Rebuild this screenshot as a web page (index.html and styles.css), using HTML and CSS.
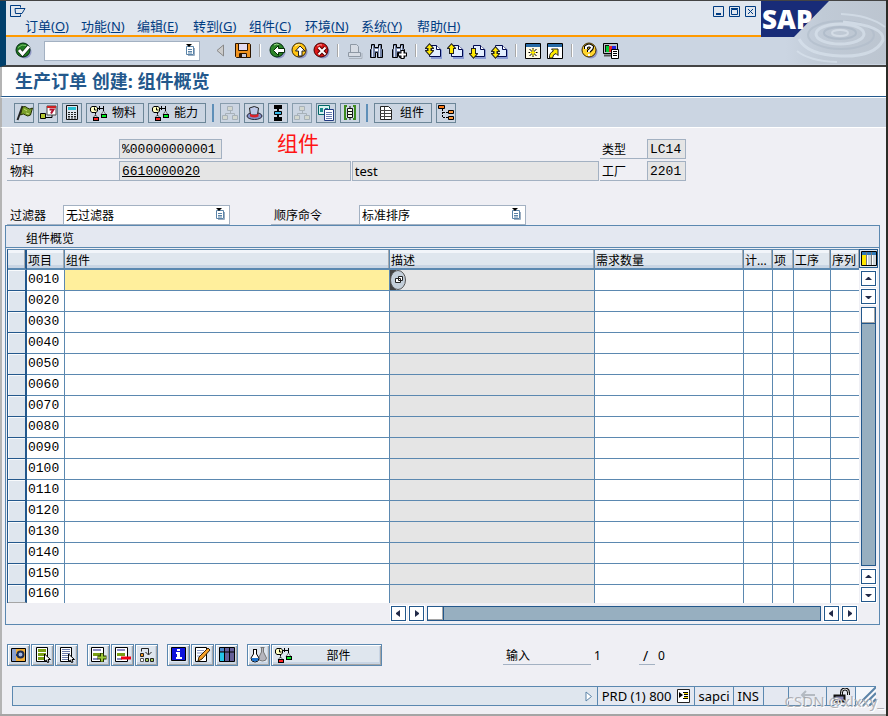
FILE: index.html
```
<!DOCTYPE html>
<html lang="zh">
<head>
    <meta charset="UTF-8">
    <meta name="viewport" content="width=device-width, initial-scale=1.0">
    <title>生产订单 创建: 组件概览</title>
    <link rel="stylesheet" href="styles.css">
</head>
<body>
    <!-- icons shared by the toolbars -->
    <svg class="sprite" aria-hidden="true">
        <symbol id="i-balance" viewBox="0 0 17 16">
            <path d="M2 1h4l2 2v3L6 8H2L0 6V3z" fill="#000"/>
            <path d="M2 2h4l1 1v3L6 7H2L1 6V3z" fill="#ffffc0"/>
            <path d="M4.500 2.500v2.500h2" fill="none" stroke="#000"/>
            <path d="M8 3.500h6M9.500 1v4M13.500 1v5M5.500 8v3" stroke="#000" fill="none"/>
            <path d="M11 9.500L13.500 6 16 9.500M3 13l2.500-3.500L8 13" stroke="#777" fill="none"/>
            <path d="M11 9h6v4h-6zM3 12h6v4H3z" fill="#000"/>
            <path d="M12 10h4v2h-4z" fill="#0e2"/>
            <path d="M4 13h4v2H4z" fill="#f22"/>
        </symbol>
        <symbol id="i-list" viewBox="0 0 10 12">
            <path d="M1.500 2.500h7v8h-7z" fill="#fff" stroke="#5b84a8"/>
            <path d="M3 5.500h4M3 7.500h4M3 9h4" stroke="#5b84a8"/>
            <path d="M9.500 4v7.500H3" fill="none" stroke="#9aacc0"/>
            <path d="M1 0h6L4 3z" fill="#000"/>
        </symbol>
        <symbol id="i-binoc" viewBox="0 0 16 16">
            <path d="M2.500 1.500h3v3h4v-3h3v4l1 1v8h-5v-5h-2v5h-5v-8l1-1z" fill="#7484a6" stroke="#000"/>
            <path d="M3.500 3v11M10.500 3v11" stroke="#dde6f5"/>
            <path d="M6 6h3v2H6z" fill="#fff"/>
        </symbol>
        <symbol id="i-page" viewBox="0 0 17 16">
            <path d="M6 4h8l3 3v9H6z" fill="#8b9cd4"/>
            <path d="M4.500 2.500h7l4 4v7h-11z" fill="#e4efff" stroke="#000a50"/>
            <path d="M11.500 2.500v4h4" fill="#fff" stroke="#000a50"/>
        </symbol>
        <symbol id="i-tree" viewBox="0 0 16 16">
            <path d="M8.500 5v3M3.500 11V8.500h9V11" fill="none" stroke="#98a2a8"/>
            <path d="M5.500 1.500h5v4h-5zM.500 10.500h5v4h-5zM10.500 10.500h5v4h-5z" fill="#d5d8c8" stroke="#98a2a8"/>
        </symbol>
        <symbol id="i-cursor" viewBox="0 0 7 9">
            <path d="M.500 0v7.500l2-1.500 1 2.500 1.500-.500-1-2.500h2.500z" fill="#fff" stroke="#000"/>
        </symbol>
    </svg>

    <div class="window">
        <header class="head">
            <div class="head-main">
                <nav class="menubar">
                    <button class="sysmenu" aria-label="系统菜单">
                        <svg width="16" height="12" viewBox="0 0 16 12"><path d="M10.500 2.500v-2H.500v11h10v-2M5 3.500h10l-3 5H5.500z" fill="none" stroke="#003c82"/></svg>
                    </button>
                    <div class="menus">
                        <button>订单(<u>O</u>)</button>
                        <button>功能(<u>N</u>)</button>
                        <button>编辑(<u>E</u>)</button>
                        <button>转到(<u>G</u>)</button>
                        <button>组件(<u>C</u>)</button>
                        <button>环境(<u>N</u>)</button>
                        <button>系统(<u>Y</u>)</button>
                        <button>帮助(<u>H</u>)</button>
                    </div>
                    <div class="winbtns">
                        <button aria-label="最小化"><svg width="11" height="11"><path d="M.500.500h10v10H.500z" fill="none" stroke="#003c82"/><path d="M3 7h5v2H3z" fill="#003c82"/></svg></button>
                        <button aria-label="最大化"><svg width="11" height="11"><path d="M.500.500h10v10H.500zM2.500 3.500h6v5h-6zM2 2.500h7" fill="none" stroke="#003c82"/></svg></button>
                        <button aria-label="关闭"><svg width="11" height="11"><path d="M.500.500h10v10H.500zM3 3l5 5M8 3l-5 5" fill="none" stroke="#003c82"/></svg></button>
                    </div>
                </nav>
                <div class="std-toolbar">
                    <button aria-label="回车"><svg width="17" height="17" viewBox="0 0 17 17"><circle cx="10" cy="10" r="6.500" fill="#8f96c4"/><circle cx="8" cy="8" r="7" fill="#207a20" stroke="#002a10"/><path d="M3 5.500q4-4 8-2" stroke="#7dc36c" fill="none"/><path d="M4 8l3.500 4L14 4.500" fill="none" stroke="#000" stroke-width="4"/><path d="M4 8l3.500 4L14 4.500" fill="none" stroke="#fff" stroke-width="3"/></svg></button>
                    <span class="command">
                        <input type="text" aria-label="命令">
                        <svg width="10" height="12"><use href="#i-list"/></svg>
                    </span>
                    <button aria-label="收起" class="collapse"><svg width="9" height="13"><path d="M7.500 1v11L1 6.500z" fill="#ccc" stroke="#888"/></svg></button>
                    <button aria-label="保存"><svg width="16" height="16"><path d="M.500.500h14l1 1v13H1.500l-1-1z" fill="#f0931e" stroke="#2a1400"/><path d="M3.500.500h9v7h-9z" fill="#e3dbf0" stroke="#2a1400"/><path d="M4.500 10.500h7v4h-7z" fill="#c8c8d8" stroke="#2a1400"/><path d="M5 11h2v4H5z" fill="#2a1400"/></svg></button>
                    <i class="sep"></i>
                    <button aria-label="返回"><svg width="17" height="17" viewBox="0 0 17 17"><circle cx="10" cy="10" r="6.500" fill="#8f96c4"/><circle cx="8" cy="8" r="7" fill="#2c8528" stroke="#002a10"/><path d="M5 3q3-2 5 0" stroke="#a6dd90" fill="none"/><path d="M4.500 8.500l5-5V6.500h6v4h-6v3z" fill="#fff" stroke="#053005"/></svg></button>
                    <button aria-label="退出"><svg width="17" height="17" viewBox="0 0 17 17"><circle cx="10" cy="10" r="6.500" fill="#8f96c4"/><circle cx="8" cy="8" r="7" fill="#ffc412" stroke="#3d2900"/><path d="M4 4q3-2 5-1" stroke="#fff6ad" fill="none"/><path d="M9 4l5 5h-3v5H7.500V9h-3z" fill="#fff" stroke="#222"/></svg></button>
                    <button aria-label="取消"><svg width="17" height="17" viewBox="0 0 17 17"><circle cx="10" cy="10" r="6.500" fill="#8f96c4"/><circle cx="8" cy="8" r="7" fill="#dc1717" stroke="#400"/><path d="M4 4q3-2 5-1" stroke="#ffa0a0" fill="none"/><path d="M5.500 5.500l7 7M12.500 5.500l-7 7" stroke="#500" stroke-width="4"/><path d="M5.500 5.500l7 7M12.500 5.500l-7 7" stroke="#fff" stroke-width="2"/></svg></button>
                    <i class="sep"></i>
                    <button aria-label="打印"><svg width="16" height="16"><path d="M3.500 9V1.500h6l2 2V9M1.500 9.500h12v4h-12z" fill="#d7dce4" stroke="#8e98a4"/><path d="M2 15.500h13V10" fill="none" stroke="#aab2bc"/></svg></button>
                    <button aria-label="查找"><svg width="16" height="16"><use href="#i-binoc"/></svg></button>
                    <button aria-label="继续查找"><svg width="16" height="16"><use href="#i-binoc"/><path d="M11.500 7v9M7 11.500h9" stroke="#000" stroke-width="4"/><path d="M11.500 8v7M8 11.500h7" stroke="#fff" stroke-width="2"/></svg></button>
                    <i class="sep"></i>
                    <button aria-label="第一页"><svg width="17" height="16"><use href="#i-page"/><path d="M0 5l4.500-5L9 5v1H7v1h2v1l-4.500 5L0 8V7h2V6H0z" fill="#222"/><path d="M1.500 5l3-3.500 3 3.500H5.500v3h2l-3 3.500L1.500 8h2V5z" fill="#ffe800"/></svg></button>
                    <button aria-label="上一页"><svg width="17" height="16"><use href="#i-page"/><path d="M0 5l4.500-5L9 5v1H7v5H2V6H0z" fill="#222"/><path d="M1.500 5l3-3.500 3 3.500H6v5H3V5z" fill="#ffe800"/></svg></button>
                    <button aria-label="下一页"><svg width="17" height="16"><use href="#i-page"/><path d="M0 11l4.500 5L9 11v-1H7V5H2v5H0z" fill="#222"/><path d="M1.500 11l3 3.500 3-3.500H6V6H3v5z" fill="#ffe800"/></svg></button>
                    <button aria-label="最后一页"><svg width="17" height="16"><use href="#i-page"/><path d="M0 8l4.500-5L9 8v1H7v1h2v1l-4.500 5L0 11v-1h2V9H0z" fill="#222"/><path d="M1.500 8l3-3.500 3 3.500H5.500v3h2l-3 3.500L1.500 11h2V8z" fill="#ffe800"/></svg></button>
                    <i class="sep"></i>
                    <button aria-label="创建会话"><svg width="16" height="16"><path d="M.500.500h15v15H.500z" fill="#fffbe6" stroke="#000"/><path d="M1 1h14v3H1z" fill="#276aa6"/><path d="M8 5v9M3.500 9.500h9M4.500 6l7 7M11.500 6l-7 7" stroke="#000"/><path d="M8 6v7M5 9.500h6" stroke="#ffec00"/><circle cx="8" cy="9.500" r="1.500" fill="#ffec00"/></svg></button>
                    <button aria-label="快捷方式"><svg width="16" height="16"><path d="M.500.500h15v15H.500z" fill="#fff" stroke="#000"/><path d="M1 1h14v3H1z" fill="#276aa6"/><path d="M4.500 6h6.500v6.500L9 10.500Q6 11 5.500 15H2.500Q2 10 6.500 8z" fill="#ffec00" stroke="#222"/></svg></button>
                    <i class="sep"></i>
                    <button aria-label="帮助"><svg width="17" height="17" viewBox="0 0 17 17"><circle cx="10" cy="10" r="6.500" fill="#8f96c4"/><circle cx="8" cy="8" r="7" fill="#ffd52e" stroke="#3d2900"/><path d="M5 7V5q3-3 6 0 0 2-3 4v1" fill="none" stroke="#000" stroke-width="4"/><path d="M5 7V5q3-3 6 0 0 2-3 4v1M8 12v2" fill="none" stroke="#fff" stroke-width="2"/></svg></button>
                    <button aria-label="定制布局"><svg width="16" height="16"><path d="M.500.500h14v10H.500z" fill="#b8c4c8" stroke="#000"/><path d="M2 2h4v7H2z" fill="#111"/><path d="M3 3h3v6H3z" fill="#0c3"/><path d="M6 3h3v6H6z" fill="#e22"/><path d="M9 3h4v6H9z" fill="#22d"/><path d="M1 12.500h8" stroke="#555" stroke-width="2"/><path d="M8.500 6.500h7v9h-7z" fill="#fff" stroke="#000"/><path d="M10 8.500h4M10 10.500h4M10 12.500h4" stroke="#000"/></svg></button>
                </div>
            </div>
            <svg class="brand" width="125" height="63" viewBox="0 0 125 63" aria-label="SAP">
                <defs>
                    <linearGradient id="water" x2="1"><stop offset=".2" stop-color="#cbd5e2"/><stop offset=".5" stop-color="#c0cad6"/><stop offset="1" stop-color="#bcc5d0"/></linearGradient>
                </defs>
                <path d="M0 0h125v63H0z" fill="url(#water)"/>
                <g fill="none" opacity=".6">
                    <ellipse cx="79" cy="32" rx="8" ry="3" stroke="#e2eaf2" stroke-width="2"/>
                    <ellipse cx="79" cy="32" rx="16" ry="6" stroke="#a8b5c4" stroke-width="2"/>
                    <ellipse cx="79" cy="33" rx="24" ry="10" stroke="#dde7f1" stroke-width="3"/>
                    <ellipse cx="80" cy="34" rx="33" ry="14" stroke="#b0bcca" stroke-width="2"/>
                    <path d="M38 38q8 16 42 17t42-16q2-14-40-18" stroke="#dde7f1" stroke-width="3"/>
                    <path d="M36 50q12 10 40 11M124 26Q108 14 80 13" stroke="#dce6f0" stroke-width="2"/>
                </g>
                <path d="M0 0h68L33 36H0z" fill="#182c78"/>
                <text x="1" y="28" class="brand-text">SAP</text>
            </svg>
        </header>

        <h1 class="title">生产订单 创建: 组件概览</h1>

        <div class="app-toolbar">
            <button aria-label="检查"><svg width="17" height="16"><path d="M6.500 1L1.500 15" stroke="#222" stroke-width="2"/><path d="M6.500 2q3-1.500 5 1 2 2 5 0l-2 7q-3 2-5 0-2-2-5 0z" fill="#7ba02a" stroke="#243000"/><path d="M8 4l3 2M10 8l3 1" stroke="#c2da73"/></svg></button>
            <button aria-label="可用性"><svg width="17" height="16"><path d="M.500 8.500h5v5h-5z" fill="#b4c832" stroke="#000"/><path d="M6 12.500h6v-3" fill="none" stroke="#000"/><path d="M7 1h9v9H7z" fill="#fff" stroke="#444"/><path d="M7 1h9v2H7z" fill="#c22"/><path d="M9.500 4.500h4l-2.500 4" fill="none" stroke="#b01030" stroke-width="2"/></svg></button>
            <button aria-label="成本"><svg width="14" height="16"><path d="M1.500.500h11v14h-11z" fill="#dfe7ef" stroke="#111"/><path d="M3 2h8v3H3z" fill="#28bdd0"/><path d="M3 7.500h8M3 9.500h8M3 11.500h8M3 13h8" stroke="#222" stroke-dasharray="2 1"/></svg></button>
            <button class="wide"><svg width="17" height="16"><use href="#i-balance"/></svg>物料</button>
            <button class="wide"><svg width="17" height="16"><use href="#i-balance"/></svg>能力</button>
            <i class="bar"></i>
            <button aria-label="层次" disabled><svg width="16" height="16"><use href="#i-tree"/></svg></button>
            <button aria-label="抬头"><svg width="17" height="16"><ellipse cx="8.500" cy="11" rx="7.500" ry="3.500" fill="#8491c8" stroke="#223"/><path d="M4.500 10L3.500 3q5-3 9 0l-1 7z" fill="#bcc8e8" stroke="#222"/><path d="M4 8.500q4 3 8.500 0v3q-4 2-8.500 0z" fill="#d8202a"/></svg></button>
            <button aria-label="工序"><svg width="10" height="16"><path d="M5 4v9" stroke="#000" stroke-width="2"/><path d="M2 1h6v2H2zM2 13h6v2H2z" fill="#fff" stroke="#000" stroke-width="2"/><path d="M1.500 6.500h7v3h-7z" fill="#39b8e8" stroke="#000"/></svg></button>
            <button aria-label="顺序" disabled><svg width="16" height="16"><use href="#i-tree"/></svg></button>
            <button aria-label="凭证"><svg width="17" height="16"><path d="M.500.500h11v9H.500z" fill="#d9f1ef" stroke="#066"/><path d="M2 3h3v4H2zM7 3h3v2H7z" fill="#1a8a8a"/><path d="M6.500 4.500h9v11h-9z" fill="#fff" stroke="#223a80"/><path d="M8 7.500h6M8 9.500h6M8 11.500h6M8 13.500h6" stroke="#667ab0"/></svg></button>
            <button aria-label="标准文本"><svg width="14" height="16"><path d="M4 1H2v13h2M10 1h2v13h-2" fill="none" stroke="#3d8a1e" stroke-width="2"/><path d="M4.500 3.500h5v3h-5zM4.500 6.500h5v3h-5zM4.500 9.500h5v3h-5z" fill="#f6ffe8" stroke="#111"/><path d="M7 1v2M7 13v2" stroke="#111"/></svg></button>
            <i class="bar"></i>
            <button class="wide"><svg width="17" height="16"><path d="M2.500 1.500h8l3 3v10h-11z" fill="#fff" stroke="#222"/><path d="M2 5.500h11M2 8.500h11M2 11.500h11M6.500 2v12" stroke="#444"/></svg>组件</button>
            <button aria-label="结构"><svg width="16" height="16"><path d="M4.500 4v8.500H10M5 7.500h6" fill="none" stroke="#000" stroke-dasharray="2 1"/><path d="M.500.500h6v3h-6z" fill="#ff7b18" stroke="#000"/><path d="M10.500 5.500h5v3h-5zM10.500 11.500h5v3h-5z" fill="#ff9838" stroke="#000"/></svg></button>
        </div>

        <main class="content">
            <form class="order">
                <div class="row">
                    <label for="order">订单</label>
                    <input id="order" class="f-order" value="%00000000001" readonly>
                    <span class="spring"></span>
                    <label for="type" class="short">类型</label>
                    <input id="type" class="f-code" value="LC14" readonly>
                </div>
                <div class="row">
                    <label for="material">物料</label>
                    <input id="material" class="f-material" value="6610000020" readonly>
                    <input class="f-text" value="test" aria-label="物料描述" readonly>
                    <label for="plant" class="short">工厂</label>
                    <input id="plant" class="f-code" value="2201" readonly>
                </div>
                <span class="note">组件</span>
            </form>

            <div class="filters">
                <label for="filter">过滤器</label>
                <span class="combo">
                    <select id="filter"><option>无过滤器</option></select>
                    <svg width="10" height="12"><use href="#i-list"/></svg>
                </span>
                <label for="sort" class="sort-label">顺序命令</label>
                <span class="combo">
                    <select id="sort"><option>标准排序</option></select>
                    <svg width="10" height="12"><use href="#i-list"/></svg>
                </span>
            </div>

            <section class="panel">
                <h2>组件概览</h2>
                <div class="grid">
                    <table>
                        <colgroup>
                            <col class="c-sel"><col class="c-item"><col><col class="c-desc"><col class="c-qty">
                            <col class="c-unit"><col class="c-cat"><col class="c-op"><col class="c-seq">
                        </colgroup>
                        <thead>
                            <tr><th></th><th>项目</th><th>组件</th><th>描述</th><th>需求数量</th><th>计...</th><th>项</th><th>工序</th><th>序列</th></tr>
                        </thead>
                        <tbody id="rows"></tbody>
                    </table>
                    <div class="vscroll">
                        <button class="config" aria-label="表设置"><svg width="16" height="16"><path d="M.500.500h15v14H.500z" fill="#fff" stroke="#000"/><path d="M1 1h14v3H1z" fill="#2f79b8"/><path d="M1 4h4v10H1z" fill="#ffe600"/><path d="M7 4h3v10H7zM12 4h3v10h-3z" fill="#d0d6dc"/><path d="M5.500 1v13M10.500 1v13" stroke="#777"/></svg></button>
                        <button class="arrow" aria-label="上"><svg width="9" height="9"><path d="M4 3h1l3 3H1z"/></svg></button>
                        <button class="arrow" aria-label="下"><svg width="9" height="9"><path d="M4 7h1l3-3H1z"/></svg></button>
                        <div class="track"><span class="thumb"></span></div>
                        <button class="arrow" aria-label="上一页"><svg width="9" height="9"><path d="M4 3h1l3 3H1z"/></svg></button>
                        <button class="arrow" aria-label="下一页"><svg width="9" height="9"><path d="M4 7h1l3-3H1z"/></svg></button>
                    </div>
                </div>
                <div class="hscroll">
                    <button class="arrow" aria-label="左"><svg width="9" height="9"><path d="M2 4v1l4 3V1z"/></svg></button>
                    <button class="arrow" aria-label="右"><svg width="9" height="9"><path d="M7 4v1L3 8V1z"/></svg></button>
                    <div class="track"><span class="thumb"></span></div>
                    <button class="arrow" aria-label="左页"><svg width="9" height="9"><path d="M2 4v1l4 3V1z"/></svg></button>
                    <button class="arrow" aria-label="右页"><svg width="9" height="9"><path d="M7 4v1L3 8V1z"/></svg></button>
                </div>
            </section>

            <div class="actions">
                <div class="group">
                    <button aria-label="明细"><svg width="16" height="16"><path d="M.500 1.500h14v13H.500z" fill="#f2ae38" stroke="#000"/><path d="M1 2h4v12H1z" fill="#8aa0d0"/><path d="M5 7h3v2H5z" fill="#24427e"/><circle cx="9.500" cy="7.500" r="3" fill="#a4b8e0" stroke="#1c2c50" stroke-width="2"/></svg></button>
                    <button aria-label="全选"><svg width="16" height="16"><path d="M1.500.500h11v14h-11z" fill="#fff" stroke="#000"/><path d="M3 2h8v3H3zM3 6h8v3H3zM3 10h8v3H3z" fill="#7a9f16"/><use href="#i-cursor" x="9" y="7" width="7" height="9"/></svg></button>
                    <button aria-label="取消全选"><svg width="16" height="16"><path d="M1.500.500h11v14h-11z" fill="#fff" stroke="#000"/><path d="M3 2.500h8M3 4.500h8M3 6.500h8M3 8.500h8M3 10.500h8M3 12.500h8" stroke="#6c7cab"/><use href="#i-cursor" x="9" y="7" width="7" height="9"/></svg></button>
                </div>
                <div class="group">
                    <button aria-label="插入"><svg width="17" height="16"><path d="M1.500.500h12v14h-12z" fill="#fff" stroke="#000"/><path d="M3 3h8M3 12h5" stroke="#8b8bc0" stroke-width="2"/><path d="M3 6h8v3H3z" fill="#7a9f16"/><path d="M12 6v9M7.500 10.500h9" stroke="#243000" stroke-width="4"/><path d="M12 6.500v8M8 10.500h8" stroke="#9cc93a" stroke-width="2"/></svg></button>
                    <button aria-label="删除"><svg width="17" height="16"><path d="M1.500.500h12v14h-12z" fill="#fff" stroke="#000"/><path d="M3 3h8M3 12h5" stroke="#8b8bc0" stroke-width="2"/><path d="M3 6h8v3H3z" fill="#7a9f16"/><path d="M7 9.500h10v3H7z" fill="#f00015"/></svg></button>
                    <button aria-label="重新排序"><svg width="16" height="16"><path d="M2.500 4.500v-3h7v6M6.500 5l3 3 3-3" fill="none" stroke="#222"/><path d="M1.500 6.500h3v3h-3z" fill="#f6981e" stroke="#222"/><path d="M1.500 11.500h3v3h-3z" fill="#fff" stroke="#555"/><path d="M6.500 11.500h3v3h-3zM11.500 11.500h3v3h-3z" fill="#a8d05a" stroke="#222"/></svg></button>
                </div>
                <div class="group">
                    <button aria-label="信息"><svg width="16" height="16"><path d="M.500.500h14v13H.500z" fill="#0d12dc" stroke="#000"/><path d="M6 2h3v2H6zM5 5h4v5h2v2H5v-2h1V7H5z" fill="#fff"/></svg></button>
                    <button aria-label="长文本"><svg width="17" height="16"><path d="M1.500.500h11v14h-11z" fill="#fff" stroke="#000"/><path d="M3 3.500h7M3 6h6M3 9h4" stroke="#8894c0"/><path d="M14 1l2 2-8 9-4 2 1-4z" fill="#f7a128" stroke="#3a2000"/></svg></button>
                    <button aria-label="列"><svg width="16" height="16"><path d="M.500.500h15v14H.500z" fill="#655f98" stroke="#000"/><path d="M1 1h4v3H1z" fill="#4c84c8"/><path d="M1 5h4v9H1z" fill="#25c4e8"/><path d="M5.500 1v13M10.500 1v13M1 5h14" stroke="#000"/></svg></button>
                </div>
                <div class="group">
                    <button aria-label="批次确定"><svg width="17" height="16"><path d="M10.500.500h4M11.500 1v4l-3 6q0 3 4 3t4-3l-3-6V1" fill="#b5b5bd" stroke="#777"/><path d="M3 2.500h4M3.500 3v4L1 11q0 4 4 4t4-4L6.500 7V3" fill="#fff" stroke="#000"/><path d="M1.500 11h7q0 3.500-3.500 3.500T1.500 11z" fill="#1b72d0"/></svg></button>
                    <button class="part"><svg width="17" height="16"><use href="#i-balance"/></svg><span>部件</span></button>
                </div>
                <div class="entry">
                    <label for="entry">输入</label>
                    <input id="entry" value="1">
                    <span class="slash">/</span>
                    <output>0</output>
                </div>
            </div>
        </main>

        <footer class="status">
            <div class="msg"><svg width="8" height="11"><path d="M1 1v9l5.500-4.500z" fill="#fff" stroke="#5b84a8"/></svg></div>
            <div class="cell">PRD (1) 800
                <button aria-label="系统信息"><svg width="13" height="14"><path d="M.500.500h12v13H.500z" fill="#fff" stroke="#222"/><path d="M2 3l4 3-4 3z" fill="#000"/><path d="M6 3.500h5M7 5.500h4M7 7.500h4M6 9.500h5" stroke="#000"/><path d="M7 4.500h4M7 8.500h4" stroke="#ffe600"/></svg></button>
            </div>
            <div class="cell c-host">sapci</div>
            <div class="cell">INS</div>
            <div class="cell c-a"></div>
            <div class="cell c-b"><svg width="16" height="14"><path d="M2 6h13M6 2L2 6l4 4" fill="none" stroke="#b4bac2" stroke-width="2"/></svg></div>
            <div class="cell c-c"><svg width="17" height="16"><path d="M8.500 8V4.500q0-3.500 3.500-3.500t3.500 3.500V7" fill="none" stroke="#111" stroke-width="3"/><path d="M8.500 8V4.500q0-3.500 3.500-3.500t3.500 3.500V7" fill="none" stroke="#ddd"/><path d="M1.500 7.500h10v6h-10z" fill="#8888b8" stroke="#111" stroke-width="2"/></svg></div>
            <div class="grip"><svg width="20" height="19"><path d="M0 0h19L0 19z" fill="#f4f7fb"/><path d="M1 19L20 0M7 19L20 6M13 19l7-7" stroke="#5b84a8" stroke-width="2"/><path d="M4 19L20 3M10 19L20 9" stroke="#fff"/></svg></div>
        </footer>
        <span class="watermark">CSDN @xlxxy_</span>
    </div>

    <script>
        const rows = document.getElementById('rows');
        for (let i = 1; i <= 16; i++) {
            const item = String(i * 10).padStart(4, '0');
            const help = i === 1
                ? '<button class="f4" aria-label="搜索帮助"><svg width="17" height="20"><path d="M0 0h6v20H0z" fill="#444"/><ellipse cx="8" cy="10" rx="7.500" ry="9.500" fill="#c4cfda" stroke="#555"/><path d="M8.500 6.500h4v4h-4zM5.500 8.500h5v4h-5z" fill="#fff" stroke="#222"/></svg></button>'
                : '';
            const row = document.createElement('tr');
            row.innerHTML = `
                <td class="sel"></td>
                <td class="item">${item}</td>
                <td class="component"><input aria-label="组件 ${item}"></td>
                <td class="desc">${help}</td>
                <td></td><td></td><td></td><td></td><td></td>
            `;
            rows.appendChild(row);
        }
    </script>
</body>
</html>
```
FILE: styles.css
```
* {
    box-sizing: border-box;
}
body {
    margin: 0;
    background-color: #2b2b26;
    font-family: "Noto Sans", "Noto Sans CJK SC", sans-serif;
    font-size: 12px;
    line-height: 16px;
    color: #000000;
}
button, input, select {
    font: inherit;
    color: inherit;
    margin: 0;
    padding: 0;
    border: none;
    border-radius: 0;
    background: none;
}
svg {
    display: block;
    flex: none;
}
.sprite {
    display: none;
}
.window {
    position: relative;
    display: flex;
    flex-direction: column;
    min-height: 100vh;
    margin-right: 2px;
    border-top: 1px solid #444444;
    border-bottom: 2px solid #a5a5a5;
    background-color: #efeff4;
}

/* header */
.head {
    display: flex;
    height: 66px;
    border-left: 6px solid #003f6b;
    border-bottom: 2px solid #444444;
    background-color: #cbd5e2;
}
.head-main {
    flex: 1;
}
.menubar {
    display: grid;
    grid-template-columns: 1fr auto;
    height: 36px;
    padding-left: 4px;
    border-bottom: 2px solid #ff9a00;
    background-color: #e0e6ee;
}
.sysmenu {
    padding-top: 4px;
    justify-self: start;
    height: 16px;
}
.menus {
    grid-row: 2;
    display: flex;
    gap: 12px;
    padding-left: 15px;
    font-size: 13px;
    color: #003c82;
}
.menus button {
    height: 18px;
    line-height: 18px;
    min-width: 44px;
    text-align: left;
    white-space: nowrap;
}
.winbtns {
    grid-row: 1;
    grid-column: 2;
    display: flex;
    gap: 5px;
    padding: 5px 5px 0 0;
}
.std-toolbar {
    display: flex;
    align-items: center;
    gap: 5px;
    height: 27px;
    padding-left: 9px;
}
.std-toolbar button {
    width: 17px;
}
.command {
    position: relative;
    margin: 0 11px 0 7px;
}
.std-toolbar .collapse {
    width: 14px;
}
.command input {
    display: block;
    width: 156px;
    height: 20px;
    border: 1px solid #a3b1c2;
    background-color: #ffffff;
}
.command svg, .combo svg {
    position: absolute;
    top: 3px;
    right: 5px;
    pointer-events: none;
}
.sep {
    width: 2px;
    height: 13px;
    margin: 0 3px 0 2px;
    background-color: #a8a8a8;
    border-right: 1px solid #ffffff;
}
.brand-text {
    font: 800 26px "Open Sans", "Liberation Sans", sans-serif;
    fill: #ffffff;
}

/* title and application toolbar */
.title {
    margin: 0;
    height: 30px;
    padding-left: 13px;
    line-height: 28px;
    font-size: 18px;
    color: #23588c;
    background-color: #ffffff;
    border-left: 2px solid #b4b4b4;
    border-bottom: 1px solid #23588c;
}
.app-toolbar {
    display: flex;
    align-items: center;
    gap: 4px;
    height: 31px;
    padding-left: 12px;
    border-left: 2px solid #b4b4b4;
    border-top: 1px solid #ffffff;
    border-bottom: 1px solid #ffffff;
    background-color: #cbd5e2;
}
.app-toolbar button {
    display: flex;
    align-items: center;
    justify-content: center;
    width: 20px;
    height: 20px;
    border: 1px solid #6c8698;
}
.app-toolbar .wide {
    justify-content: flex-start;
    gap: 5px;
    width: 58px;
    padding-left: 3px;
    white-space: nowrap;
}
.app-toolbar button:disabled {
    opacity: 0.7;
}
.bar {
    width: 2px;
    height: 18px;
    margin: 0 2px;
    background-color: #5f8fb8;
}

/* order form */
.content {
    flex: 1;
    padding: 11px 6px 0 3px;
    border-left: 2px solid #b4b4b4;
}
.order {
    position: relative;
    display: flex;
    flex-direction: column;
    gap: 2px;
    width: 81%;
    max-width: 681px;
    padding-left: 2px;
}
.row, .filters {
    display: flex;
    align-items: stretch;
    height: 20px;
}
.row label, .filters label {
    width: 112px;
    padding: 3px 0 0 3px;
    border-bottom: 1px solid #a3b1c2;
    white-space: nowrap;
}
.row .short {
    width: 47px;
    margin-left: 1px;
    padding-left: 2px;
}
.row input {
    height: 20px;
    padding: 0 2px;
    border: 1px solid #a3b1c2;
    background-color: #e5e5e5;
    font-family: "Liberation Mono", monospace;
    font-size: 13px;
}
.spring {
    flex: 1;
}
.row .f-order {
    width: 103px;
}
.row .f-code {
    width: 39px;
}
.row .f-material {
    flex: 231 1 0;
    min-width: 0;
    text-decoration: underline;
}
.row .f-text {
    flex: 247 1 0;
    min-width: 0;
    margin-left: 1px;
    font-family: "Noto Sans", sans-serif;
}
.note {
    position: absolute;
    left: 272px;
    top: -9px;
    font-size: 21px;
    line-height: 26px;
    color: #ff1414;
}
.filters {
    margin-top: 24px;
    padding-left: 2px;
}
.filters label {
    width: 56px;
}
.filters .sort-label {
    width: 88px;
    margin-left: 41px;
}
.combo {
    position: relative;
}
.combo select {
    display: block;
    appearance: none;
    width: 167px;
    height: 20px;
    padding: 1px 0 0 2px;
    border: 1px solid #a3b1c2;
    background-color: #ffffff;
}

/* component table */
.panel {
    border: 1px solid #5b88b0;
    padding: 0 1px 3px 1px;
}
.panel h2 {
    margin: 0 -1px 1px -1px;
    height: 22px;
    padding-left: 20px;
    border-bottom: 1px solid #5b88b0;
    background-color: #e4e8f1;
    font-size: 12px;
    font-weight: normal;
    line-height: 26px;
}
.grid {
    display: flex;
}
table {
    flex: 1;
    width: 100%;
    table-layout: fixed;
    border-collapse: separate;
    border-spacing: 0;
    border-top: 1px solid #5b88b0;
    border-left: 1px solid #23588c;
}
.c-sel { width: 19px; }
.c-item { width: 38px; }
.c-desc { width: 205px; }
.c-qty { width: 149px; }
.c-unit { width: 29px; }
.c-cat { width: 21px; }
.c-op { width: 37px; }
.c-seq { width: 28px; }
th {
    height: 20px;
    padding: 3px 0 0 1px;
    border-right: 1px solid #5b88b0;
    border-bottom: 2px solid #5b88b0;
    background: linear-gradient(#f2f5fa 0 3px, #dfe6ee 3px 15px, #c9d5e4 15px);
    box-shadow: inset -1px 0 #a8aaae;
    font-weight: normal;
    line-height: 14px;
    text-align: left;
    white-space: nowrap;
    overflow: hidden;
}
td {
    height: 21px;
    padding: 0;
    border-right: 1px solid #5b88b0;
    border-bottom: 1px solid #5b88b0;
    background-color: #ffffff;
    line-height: 20px;
}
th:last-child, td:last-child {
    border-right: none;
}
tr:last-child td {
    height: 18px;
    border-bottom: none;
    line-height: 18px;
}
thead th:first-child, td.sel {
    border-right: 2px solid #23588c;
}
td.sel {
    border-bottom-color: #23588c;
    background-color: #dfe6ee;
    box-shadow: inset 1px 1px #f8fafc;
}
tr:last-child td.sel {
    border-bottom: 1px solid #a5a5a5;
}
.item {
    padding-left: 1px;
    font-family: "Liberation Mono", monospace;
    font-size: 13px;
}
.component input {
    display: block;
    width: 100%;
    height: 18px;
}
tr:first-child .component {
    background-color: #ffef9c;
}
.desc {
    background-color: #e5e5e5;
}
.f4 {
    display: block;
}

/* scrollbars */
.vscroll {
    display: flex;
    flex-direction: column;
    align-items: center;
    gap: 3px;
    width: 19px;
    padding-bottom: 1px;
}
.config {
    width: 19px;
    height: 19px;
    padding-left: 1px;
    border: 1px solid #23588c;
    background-color: #dfe6ee;
}
.arrow {
    display: flex;
    align-items: center;
    justify-content: center;
    flex: none;
    width: 15px;
    height: 15px;
    border: 1px solid #23588c;
    background-color: #ffffff;
    outline: 1px solid #ffffff;
    fill: #222a48;
}
.track {
    flex: 1;
    border: 1px solid #23588c;
    background-color: #97afc0;
}
.vscroll .track {
    width: 15px;
}
.thumb {
    display: block;
    height: 16px;
    border-bottom: 1px solid #23588c;
    background-color: #ffffff;
    box-shadow: inset -1px -1px #a5a5a5;
}
.hscroll {
    display: flex;
    gap: 3px;
    margin: 3px 21px 0 0;
    padding-left: 384px;
}
.hscroll .thumb {
    width: 16px;
    height: 13px;
    border-bottom: none;
    border-right: 1px solid #23588c;
}

/* buttons under the table */
.actions {
    display: flex;
    gap: 9px;
    margin-top: 19px;
    padding-left: 2px;
}
.group {
    display: flex;
    gap: 1px;
}
.group button {
    display: flex;
    align-items: center;
    justify-content: center;
    width: 23px;
    height: 22px;
    border: 1px solid #5b88b0;
    background-color: #dfe6ee;
    box-shadow: inset 1px 1px #ffffff, inset -1px -1px #a5a5a5, inset -2px -3px #c9d5e4;
}
.group .part {
    width: 111px;
    padding-left: 3px;
}
.part span {
    flex: 1;
    padding: 2px 0 0 4px;
}
.entry {
    display: flex;
    height: 21px;
    margin-left: 112px;
    line-height: 24px;
}
.entry label {
    width: 88px;
    padding-left: 3px;
    border-bottom: 1px solid #a3b1c2;
}
.entry input {
    width: 48px;
    height: 24px;
    padding-left: 3px;
}
.slash {
    width: 16px;
    padding-left: 4px;
    border-bottom: 1px solid #a3b1c2;
    font-size: 14px;
}
.entry output {
    padding-left: 3px;
}

/* status bar */
.status {
    display: flex;
    height: 48px;
    padding: 20px 10px 8px 10px;
    border-left: 2px solid #b4b4b4;
    font-size: 13px;
}
.msg {
    flex: 1;
    display: flex;
    align-items: center;
    justify-content: flex-end;
    padding-right: 4px;
    border: 1px solid #5b88b0;
    border-right: none;
    background-color: #dfe6ee;
}
.cell {
    display: flex;
    align-items: center;
    justify-content: center;
    gap: 6px;
    padding: 0 4px;
    border: 1px solid #5b88b0;
    border-right: none;
    background-color: #e4e8f1;
    white-space: nowrap;
}
.c-host {
    padding: 0 3px;
}
.c-a {
    width: 25px;
}
.c-b {
    width: 38px;
}
.c-c {
    width: 29px;
}
.grip {
    border-top: 1px solid #5b88b0;
    border-left: 1px solid #5b88b0;
}
.watermark {
    position: absolute;
    right: 2px;
    bottom: 3px;
    font-size: 15px;
    line-height: 20px;
    color: rgba(160, 160, 165, 0.8);
    text-shadow: 1px 1px #ffffff;
    pointer-events: none;
}
```
